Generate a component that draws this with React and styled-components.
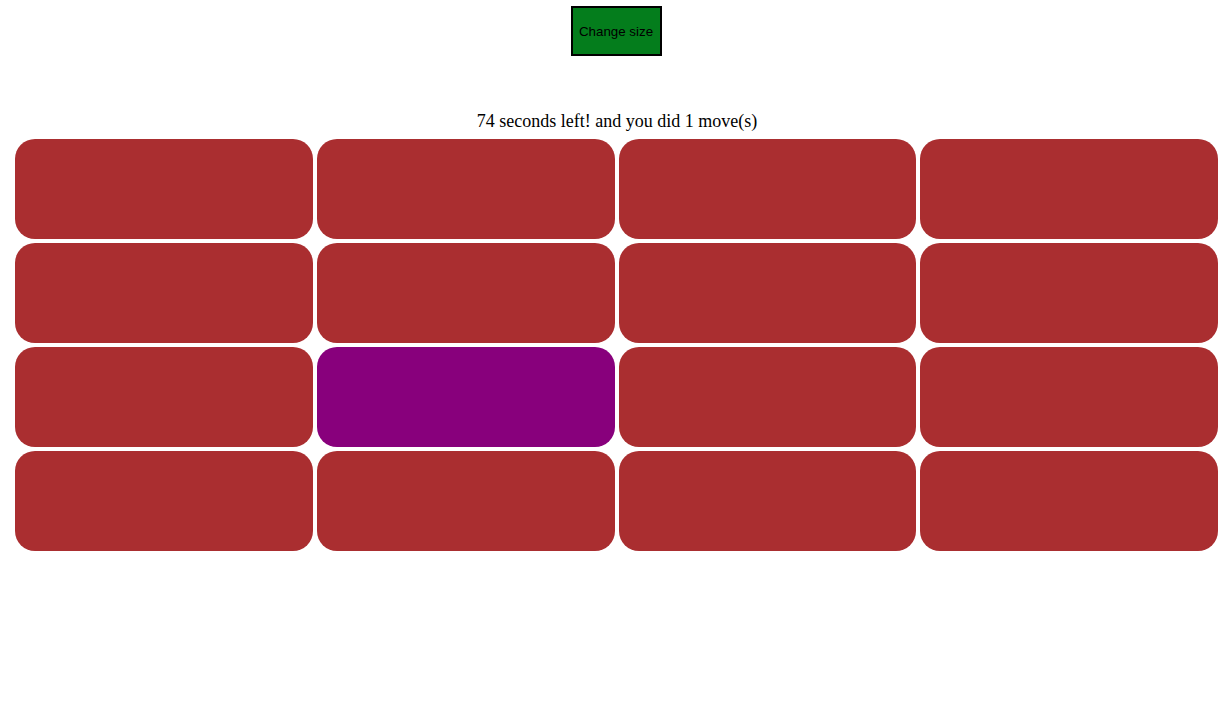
import React from "react";
import styled, { createGlobalStyle } from "styled-components";

const GlobalStyle = createGlobalStyle`
  html, body {
    margin: 0;
    padding: 0;
    background: #ffffff;
  }
  body {
    font-family: "Liberation Serif", "Times New Roman", serif;
  }
`;

const Page = styled.div`
  display: flex;
  flex-direction: column;
  align-items: center;
  padding: 6px 0 0 3px;
`;

const SizeButton = styled.button`
  width: 91px;
  height: 50px;
  margin-right: 2px;
  padding: 0;
  background: #047d1c;
  border: 2px solid #000000;
  font-family: "Liberation Sans", Arial, sans-serif;
  font-size: 13.33px;
  color: #000000;
  cursor: pointer;
`;

const Status = styled.p`
  margin: 55px 0 7px;
  font-size: 18px;
  line-height: 21px;
  color: #000000;
`;

const Board = styled.div`
  box-sizing: border-box;
  width: 100%;
  padding: 0 13px 0 12px;
  display: grid;
  grid-template-columns: repeat(${(p) => p.cols}, 1fr);
  grid-auto-rows: 100px;
  gap: 4px;
`;

const Tile = styled.div`
  border-radius: 20px;
  background: ${(p) => (p.active ? "#88007c" : "#aa2e30")};
`;

const size = 4;
const activeIndex = 9;

export default function App() {
  const tiles = Array.from({ length: size * size }, (_, i) => i);
  return (
    <>
      <GlobalStyle />
      <Page>
        <SizeButton>Change size</SizeButton>
        <Status>74 seconds left! and you did 1 move(s)</Status>
        <Board cols={size}>
          {tiles.map((i) => (
            <Tile key={i} active={i === activeIndex} />
          ))}
        </Board>
      </Page>
    </>
  );
}
